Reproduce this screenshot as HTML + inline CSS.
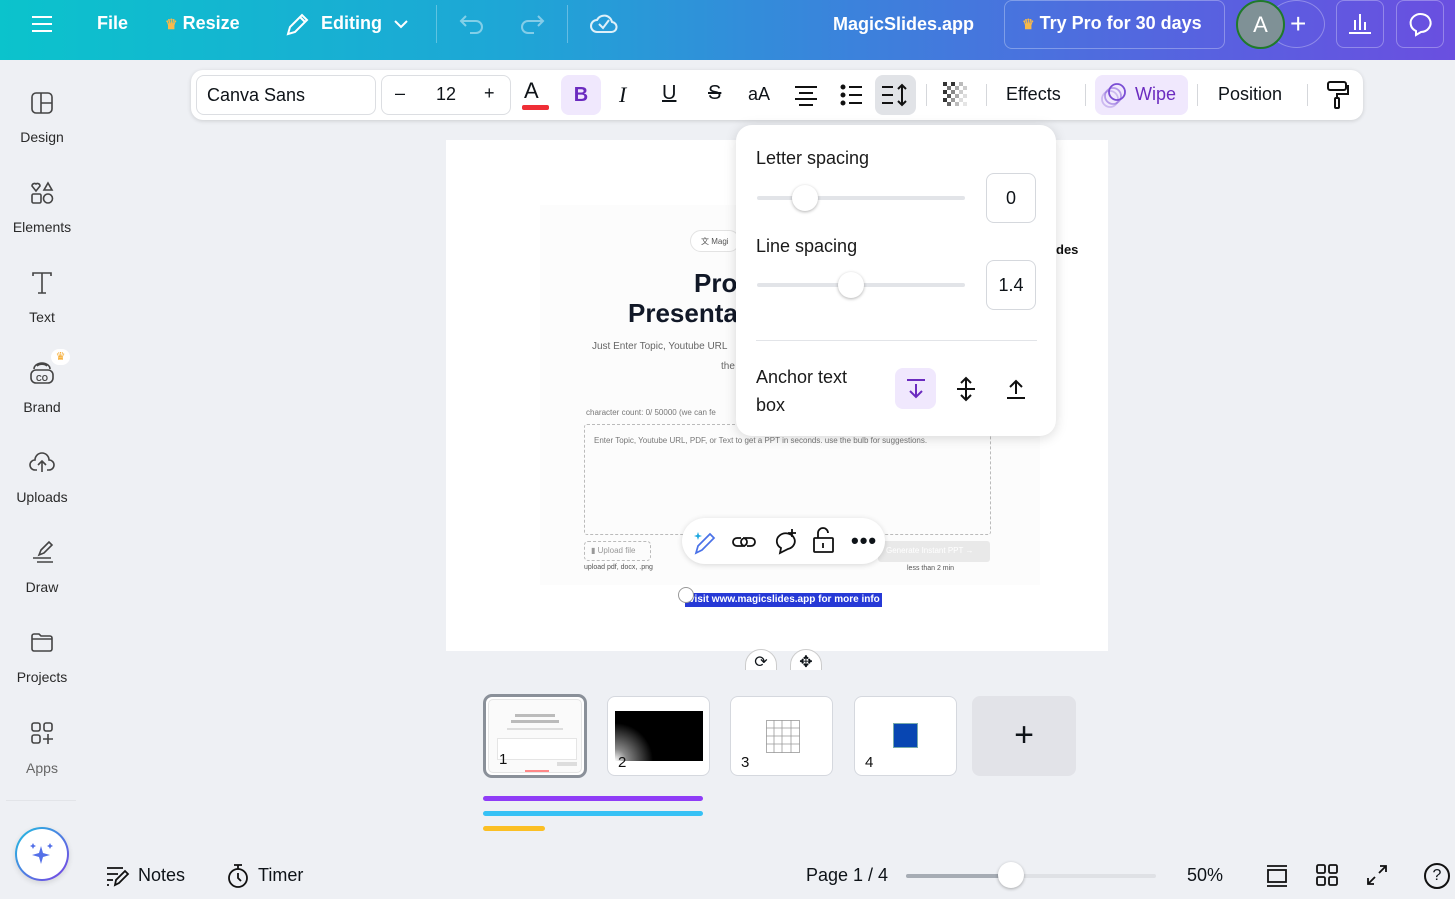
<!DOCTYPE html>
<html><head><meta charset="utf-8">
<style>
*{box-sizing:border-box;margin:0;padding:0}
body{width:1455px;height:899px;overflow:hidden;background:#eef0f4;font-family:"Liberation Sans",sans-serif;color:#0e1318;position:relative}
.abs{position:absolute}
.hdr{left:0;top:0;width:1455px;height:60px;background:linear-gradient(90deg,#0bc3cc 0%,#1ea6d6 35%,#3d80dc 60%,#5a5fe0 85%,#6a4fe0 100%)}
.hw{color:#fff;font-weight:bold;font-size:18px;top:13px}
.tb{left:191px;top:70px;width:1172px;height:50px;background:#fff;border-radius:12px;box-shadow:0 1px 4px rgba(0,0,0,.15)}
.tt{font-size:18px;color:#0e1318;top:84px}
.side{font-size:14px;color:#2a2a2a;width:84px;text-align:center;left:0}
.pop{left:736px;top:125px;width:320px;height:311px;background:#fff;border-radius:16px;box-shadow:0 2px 12px rgba(0,0,0,.15)}
.track{height:4px;background:#e2e4e8;border-radius:2px}
.knob{width:26px;height:26px;border-radius:50%;background:#fff;box-shadow:0 1px 3px rgba(0,0,0,.3)}
.box{width:50px;height:50px;border:1px solid #d5d8dd;border-radius:8px;text-align:center;line-height:48px;font-size:18px}
.thumb{top:696px;width:103px;height:80px;border:1px solid #d5d8de;border-radius:8px;background:#fff}
.num{font-size:15px;color:#111}
</style></head><body>

<div class="abs hdr"></div>
<svg class="abs" style="left:30px;top:14px" width="24" height="20"><g stroke="#fff" stroke-width="2"><line x1="2" y1="3" x2="22" y2="3"/><line x1="2" y1="10" x2="22" y2="10"/><line x1="2" y1="17" x2="22" y2="17"/></g></svg>
<div class="abs hw" style="left:97px">File</div>
<div class="abs hw" style="left:165px"><span style="color:#f8b94a;font-size:14px">♛</span> Resize</div>
<svg class="abs" style="left:284px;top:12px" width="26" height="26" fill="none" stroke="#fff" stroke-width="2"><path d="M4 22 L6 15 L18 3 L23 8 L11 20 Z M16 5 L21 10"/></svg>
<div class="abs hw" style="left:321px">Editing</div>
<svg class="abs" style="left:393px;top:18px" width="16" height="12" fill="none" stroke="#fff" stroke-width="2"><path d="M2 3 L8 9 L14 3"/></svg>
<div class="abs" style="left:436px;top:5px;width:1px;height:38px;background:rgba(255,255,255,.3)"></div>
<svg class="abs" style="left:458px;top:12px" width="30" height="24" fill="none" stroke="rgba(255,255,255,.45)" stroke-width="2"><path d="M8 4 L3 9 L8 14 M3 9 H18 a6 6 0 0 1 0 12 H12"/></svg>
<svg class="abs" style="left:516px;top:12px" width="30" height="24" fill="none" stroke="rgba(255,255,255,.45)" stroke-width="2"><path d="M22 4 L27 9 L22 14 M27 9 H12 a6 6 0 0 0 0 12 H18"/></svg>
<div class="abs" style="left:567px;top:5px;width:1px;height:38px;background:rgba(255,255,255,.3)"></div>
<svg class="abs" style="left:589px;top:10px" width="30" height="26" fill="none" stroke="rgba(255,255,255,.85)" stroke-width="2"><path d="M8 22 H22 a5 5 0 0 0 1 -10 a8 8 0 0 0 -15 -2 a6 6 0 0 0 0 12 Z M10 14 L14 18 L20 10"/></svg>
<div class="abs hw" style="left:833px;top:14px;font-size:18px">MagicSlides.app</div>
<div class="abs" style="left:1004px;top:0;width:221px;height:49px;border:1px solid rgba(255,255,255,.3);border-radius:8px"></div>
<div class="abs hw" style="left:1022px;top:13px"><span style="color:#f8b94a;font-size:14px">♛</span> Try Pro for 30 days</div>
<div class="abs" style="left:1268px;top:0;width:57px;height:48px;border:1px solid rgba(255,255,255,.3);border-radius:50%"></div>
<div class="abs" style="left:1236px;top:0;width:49px;height:49px;border-radius:50%;background:#7f9196;border:2px solid #1f7a2a;color:#fff;font-size:22px;text-align:center;line-height:45px">A</div>
<div class="abs" style="left:1290px;top:8px;color:#fff;font-size:28px;font-weight:300">+</div>
<div class="abs" style="left:1336px;top:0;width:48px;height:48px;border:1px solid rgba(255,255,255,.3);border-radius:8px"></div>
<svg class="abs" style="left:1346px;top:12px" width="28" height="24" fill="none" stroke="#fff" stroke-width="2"><path d="M3 21 H25 M9 18 V8 M14 18 V2 M19 18 V10"/></svg>
<div class="abs" style="left:1396px;top:0;width:48px;height:48px;border:1px solid rgba(255,255,255,.3);border-radius:8px"></div>
<svg class="abs" style="left:1406px;top:10px" width="28" height="28" fill="none" stroke="#fff" stroke-width="2"><path d="M10 25 L10 21 A10 9 0 1 1 15 22 Z"/></svg>

<!-- sidebar -->
<svg class="abs" style="left:30px;top:91px" width="24" height="24" fill="none" stroke="#444" stroke-width="1.6"><rect x="2" y="2" width="20" height="20" rx="4"/><path d="M11 2 V22 M11 12 H22"/></svg>
<div class="abs side" style="top:129px">Design</div>
<svg class="abs" style="left:30px;top:181px" width="24" height="24" fill="none" stroke="#444" stroke-width="1.6"><path d="M6 10 L2 5 a2.5 2.5 0 0 1 4 -2 a2.5 2.5 0 0 1 4 2 Z M18 2 L22 9 H14 Z"/><rect x="2" y="13" width="9" height="9" rx="1.5"/><circle cx="18" cy="17.5" r="4.5"/></svg>
<div class="abs side" style="top:219px">Elements</div>
<svg class="abs" style="left:30px;top:271px" width="24" height="24" fill="none" stroke="#444" stroke-width="1.6"><path d="M3 5 V2 H21 V5 M12 2 V22 M8 22 H16"/></svg>
<div class="abs side" style="top:309px">Text</div>
<svg class="abs" style="left:29px;top:360px" width="26" height="26" fill="none" stroke="#444" stroke-width="1.6"><rect x="2" y="10" width="22" height="13" rx="5"/><path d="M5 9 a8 6 0 0 1 16 0 M8 6 a6 4 0 0 1 10 0"/><text x="13" y="21" font-size="8" text-anchor="middle" fill="#444" stroke="none" font-family="Liberation Sans" font-weight="bold">CO</text></svg>
<div class="abs" style="left:51px;top:349px;width:19px;height:16px;background:#fff;border-radius:8px;color:#f5a623;font-size:11px;text-align:center;line-height:16px">♛</div>
<div class="abs side" style="top:399px">Brand</div>
<svg class="abs" style="left:29px;top:450px" width="26" height="24" fill="none" stroke="#444" stroke-width="1.6"><path d="M8 20 H6 a5 5 0 0 1 0 -10 a7 7 0 0 1 14 0 a5 5 0 0 1 0 10 H18 M13 22 V12 M9 15 L13 11 L17 15"/></svg>
<div class="abs side" style="top:489px">Uploads</div>
<svg class="abs" style="left:29px;top:539px" width="26" height="26" fill="none" stroke="#444" stroke-width="1.6"><path d="M10 16 L12 11 L20 3 L23 6 L15 14 Z M4 19 H22 M8 23 H24"/></svg>
<div class="abs side" style="top:579px">Draw</div>
<svg class="abs" style="left:30px;top:631px" width="24" height="22" fill="none" stroke="#444" stroke-width="1.6"><path d="M2 5 a2 2 0 0 1 2 -2 H9 L11 5 H20 a2 2 0 0 1 2 2 V18 a2 2 0 0 1 -2 2 H4 a2 2 0 0 1 -2 -2 Z M2 8 H22"/></svg>
<div class="abs side" style="top:669px">Projects</div>
<svg class="abs" style="left:30px;top:721px" width="24" height="24" fill="none" stroke="#444" stroke-width="1.6"><rect x="2" y="2" width="8" height="8" rx="2"/><rect x="14" y="2" width="8" height="8" rx="2"/><rect x="2" y="14" width="8" height="8" rx="2"/><path d="M18 13 V23 M13 18 H23"/></svg>
<div class="abs side" style="top:760px;color:#666">Apps</div>
<div class="abs" style="left:6px;top:800px;width:70px;height:1px;background:#e2e4e8"></div>
<div class="abs" style="left:15px;top:827px;width:54px;height:54px;border-radius:50%;background:linear-gradient(#fff,#fff) padding-box,linear-gradient(135deg,#1ec0e0,#7b3fe4) border-box;border:2px solid transparent;box-shadow:0 2px 6px rgba(0,0,0,.12)"></div>
<svg class="abs" style="left:27px;top:840px" width="30" height="28" fill="#5470e8"><path d="M14 6 L16 13 L23 15 L16 17 L14 24 L12 17 L5 15 L12 13 Z"/><path d="M6 3 L7 5 L9 6 L7 7 L6 9 L5 7 L3 6 L5 5 Z"/><path d="M23 3 L24 5 L26 6 L24 7 L23 9 L22 7 L20 6 L22 5 Z"/></svg>

<!-- slide -->
<div class="abs" style="left:446px;top:140px;width:662px;height:511px;background:#fff"></div>
<div class="abs" style="left:540px;top:205px;width:500px;height:380px;background:#fcfcfc"></div>
<div class="abs" style="left:690px;top:230px;width:50px;height:22px;border:1px solid #e3e3e3;border-radius:11px;font-size:8px;color:#555;padding:5px 0 0 10px;background:#fff">文 Magi</div>
<div class="abs" style="left:694px;top:268px;font-size:26px;font-weight:bold;color:#111827">Pro</div>
<div class="abs" style="left:628px;top:298px;font-size:26px;font-weight:bold;color:#111827">Presenta</div>
<div class="abs" style="left:592px;top:341px;font-size:10px;color:#666">Just Enter Topic, Youtube URL</div>
<div class="abs" style="left:721px;top:361px;font-size:10px;color:#666">the</div>
<div class="abs" style="left:1056px;top:242px;font-size:13px;font-weight:bold;color:#111">des</div>
<div class="abs" style="left:586px;top:408px;font-size:8px;color:#777">character count: 0/ 50000 (we can fe</div>
<div class="abs" style="left:584px;top:424px;width:407px;height:111px;border:1px dashed #bbb;border-radius:3px"></div>
<div class="abs" style="left:594px;top:436px;font-size:8px;color:#777">Enter Topic, Youtube URL, PDF, or Text to get a PPT in seconds. use the bulb for suggestions.</div>
<div class="abs" style="left:584px;top:541px;width:67px;height:20px;border:1px dashed #bbb;border-radius:4px;font-size:8px;color:#999;padding:4px 0 0 6px">▮ Upload file</div>
<div class="abs" style="left:584px;top:564px;font-size:7px;color:#555">upload pdf, docx, .png</div>
<div class="abs" style="left:878px;top:541px;width:112px;height:21px;background:#e9e9e9;border-radius:3px;font-size:8px;color:#fff;padding:5px 0 0 8px">Generate Instant PPT →</div>
<div class="abs" style="left:907px;top:565px;font-size:7px;color:#555">less than 2 min</div>
<div class="abs" style="left:685px;top:593px;width:197px;height:14px;background:#2639d6;color:#fff;font-size:10px;font-weight:bold;line-height:14px;padding-left:4px">visit www.magicslides.app for more info</div>
<div class="abs" style="left:678px;top:587px;width:16px;height:16px;border-radius:50%;background:#fff;border:1px solid #999"></div>

<!-- context toolbar -->
<div class="abs" style="left:682px;top:518px;width:203px;height:46px;background:#fff;border-radius:23px;box-shadow:0 1px 6px rgba(0,0,0,.15)"></div>
<svg class="abs" style="left:692px;top:529px" width="26" height="26" fill="none" stroke="#4a72e8" stroke-width="1.7"><path d="M4 24 L6 17 L18 5 L22 9 L10 21 Z"/><path d="M6 3 L7 6 L10 7 L7 8 L6 11 L5 8 L2 7 L5 6 Z" fill="#1ea8e0" stroke="none"/></svg>
<svg class="abs" style="left:731px;top:529px" width="26" height="26" fill="none" stroke="#111" stroke-width="1.8"><path d="M10 9 H6 a4 4 0 0 0 0 8 H12 a4 4 0 0 0 0 -8 M16 17 H20 a4 4 0 0 0 0 -8 H14 a4 4 0 0 0 0 8"/></svg>
<svg class="abs" style="left:771px;top:528px" width="28" height="28" fill="none" stroke="#111" stroke-width="1.8"><path d="M9 25 L10 20 a9 8 0 1 1 7 1 Z M21 1 V9 M17 5 H25"/></svg>
<svg class="abs" style="left:812px;top:526px" width="24" height="28" fill="none" stroke="#111" stroke-width="1.8"><rect x="2" y="12" width="19" height="14" rx="1"/><path d="M6 12 V7 a5 5 0 0 1 10 0 M11 17 V22"/></svg>
<div class="abs" style="left:851px;top:528px;font-size:22px;font-weight:bold;letter-spacing:1px">•••</div>
<div class="abs" style="left:745px;top:649px;width:32px;height:24px;border:1px solid #ccc;border-radius:16px 16px 0 0;background:#fff;font-size:16px;text-align:center;line-height:26px">⟳</div>
<div class="abs" style="left:790px;top:649px;width:32px;height:24px;border:1px solid #ccc;border-radius:16px 16px 0 0;background:#fff;font-size:16px;text-align:center;line-height:26px">✥</div>
<div class="abs" style="left:440px;top:670px;width:680px;height:20px;background:#eef0f4"></div>

<!-- format toolbar -->
<div class="abs tb"></div>
<div class="abs" style="left:196px;top:75px;width:180px;height:40px;border:1px solid #dcdee2;border-radius:8px;font-size:18px;padding:9px 0 0 10px">Canva Sans</div>
<div class="abs" style="left:381px;top:75px;width:130px;height:40px;border:1px solid #dcdee2;border-radius:8px"></div>
<div class="abs tt" style="left:395px;top:83px">–</div>
<div class="abs tt" style="left:436px">12</div>
<div class="abs tt" style="left:484px;top:83px">+</div>
<div class="abs" style="left:524px;top:78px;font-size:22px">A</div>
<div class="abs" style="left:522px;top:105px;width:27px;height:5px;background:#ef2e36;border-radius:2px"></div>
<div class="abs" style="left:561px;top:75px;width:40px;height:40px;background:#f0e8fd;border-radius:8px;color:#6b2bbf;font-weight:bold;font-size:20px;text-align:center;line-height:40px">B</div>
<div class="abs" style="left:619px;top:82px;font-size:22px;font-style:italic;font-family:'Liberation Serif',serif">I</div>
<div class="abs" style="left:662px;top:82px;font-size:20px;text-decoration:underline">U</div>
<div class="abs" style="left:708px;top:82px;font-size:20px;text-decoration:line-through">S</div>
<div class="abs tt" style="left:748px">aA</div>
<svg class="abs" style="left:794px;top:84px" width="24" height="22" stroke="#111" stroke-width="2"><path d="M1 3 H23 M5 9 H19 M1 15 H23 M5 21 H19"/></svg>
<svg class="abs" style="left:840px;top:84px" width="24" height="22" stroke="#111" stroke-width="2"><circle cx="3" cy="3" r="1.5" fill="#111"/><circle cx="3" cy="11" r="1.5" fill="#111"/><circle cx="3" cy="19" r="1.5" fill="#111"/><path d="M9 3 H22 M9 11 H22 M9 19 H22"/></svg>
<div class="abs" style="left:875px;top:75px;width:41px;height:40px;background:#e1e3e7;border-radius:8px"></div>
<svg class="abs" style="left:881px;top:83px" width="30" height="24" fill="none" stroke="#111" stroke-width="2"><path d="M1 4 H12 M1 12 H12 M1 20 H12 M21 2 V22 M17 6 L21 2 L25 6 M17 18 L21 22 L25 18"/></svg>
<div class="abs" style="left:926px;top:84px;width:1px;height:22px;background:#d5d7db"></div>
<svg class="abs" style="left:943px;top:82px" width="26" height="26"><g fill="#333"><rect x="0" y="0" width="4" height="4"/><rect x="8" y="0" width="4" height="4"/><rect x="16" y="0" width="4" height="4" fill="#bbb"/><rect x="4" y="4" width="4" height="4" fill="#777"/><rect x="12" y="4" width="4" height="4" fill="#aaa"/><rect x="20" y="4" width="4" height="4" fill="#ccc"/><rect x="0" y="8" width="4" height="4"/><rect x="8" y="8" width="4" height="4" fill="#888"/><rect x="16" y="8" width="4" height="4" fill="#ccc"/><rect x="4" y="12" width="4" height="4" fill="#555"/><rect x="12" y="12" width="4" height="4" fill="#aaa"/><rect x="20" y="12" width="4" height="4" fill="#ddd"/><rect x="0" y="16" width="4" height="4"/><rect x="8" y="16" width="4" height="4" fill="#999"/><rect x="16" y="16" width="4" height="4" fill="#ddd"/><rect x="4" y="20" width="4" height="4" fill="#666"/><rect x="12" y="20" width="4" height="4" fill="#bbb"/><rect x="20" y="20" width="4" height="4" fill="#e5e5e5"/></g></svg>
<div class="abs" style="left:986px;top:84px;width:1px;height:22px;background:#d5d7db"></div>
<div class="abs tt" style="left:1006px">Effects</div>
<div class="abs" style="left:1085px;top:84px;width:1px;height:22px;background:#d5d7db"></div>
<div class="abs" style="left:1095px;top:75px;width:93px;height:40px;background:#f0e8fd;border-radius:8px"></div>
<svg class="abs" style="left:1101px;top:81px" width="30" height="28" fill="none" stroke="#7a4dd4" stroke-width="1.8"><circle cx="16" cy="11" r="8"/><circle cx="12" cy="15" r="8" opacity=".5"/><circle cx="9" cy="18" r="8" opacity=".3"/></svg>
<div class="abs tt" style="left:1135px;color:#6b2bbf">Wipe</div>
<div class="abs" style="left:1197px;top:84px;width:1px;height:22px;background:#d5d7db"></div>
<div class="abs tt" style="left:1218px">Position</div>
<div class="abs" style="left:1307px;top:84px;width:1px;height:22px;background:#d5d7db"></div>
<svg class="abs" style="left:1326px;top:80px" width="24" height="30" fill="none" stroke="#111" stroke-width="2"><rect x="2" y="2" width="18" height="8" rx="2"/><path d="M20 6 H22 V14 H11 V18"/><rect x="9" y="18" width="4" height="10" rx="1"/></svg>

<!-- spacing popup -->
<div class="abs pop"></div>
<div class="abs" style="left:756px;top:148px;font-size:18px;color:#1a1a1a">Letter spacing</div>
<div class="abs track" style="left:757px;top:196px;width:208px"></div>
<div class="abs knob" style="left:792px;top:185px"></div>
<div class="abs box" style="left:986px;top:173px">0</div>
<div class="abs" style="left:756px;top:236px;font-size:18px;color:#1a1a1a">Line spacing</div>
<div class="abs track" style="left:757px;top:283px;width:208px"></div>
<div class="abs knob" style="left:838px;top:272px"></div>
<div class="abs box" style="left:986px;top:260px">1.4</div>
<div class="abs" style="left:756px;top:340px;width:281px;height:1px;background:#e2e4e8"></div>
<div class="abs" style="left:756px;top:363px;font-size:18px;color:#1a1a1a;line-height:28px">Anchor text<br>box</div>
<div class="abs" style="left:895px;top:368px;width:41px;height:41px;background:#f0e8fd;border-radius:8px"></div>
<svg class="abs" style="left:904px;top:377px" width="24" height="24" fill="none" stroke="#6b2bbf" stroke-width="2"><path d="M3 3 H21 M12 7 V20 M6 14 L12 20 L18 14"/></svg>
<svg class="abs" style="left:954px;top:376px" width="24" height="26" fill="none" stroke="#111" stroke-width="2"><path d="M3 13 H21 M12 2 V24 M7 7 L12 2 L17 7 M7 19 L12 24 L17 19"/></svg>
<svg class="abs" style="left:1004px;top:377px" width="24" height="24" fill="none" stroke="#111" stroke-width="2"><path d="M3 21 H21 M12 17 V4 M6 10 L12 4 L18 10"/></svg>

<!-- thumbnails -->
<div class="abs" style="left:483px;top:694px;width:104px;height:84px;border:3px solid #8a9099;border-radius:9px;background:#fff;padding:2px"><div style="width:100%;height:100%;border-radius:5px;background:#fafafa;position:relative;border:1px solid #e5e5e5"><div style="position:absolute;left:26px;top:14px;width:40px;height:3px;background:#bbb"></div><div style="position:absolute;left:22px;top:20px;width:48px;height:3px;background:#bbb"></div><div style="position:absolute;left:18px;top:28px;width:56px;height:2px;background:#ddd"></div><div style="position:absolute;left:8px;top:38px;width:80px;height:22px;border:1px solid #e5e5e5;background:#fff"></div><div style="position:absolute;left:68px;top:62px;width:20px;height:4px;background:#ddd"></div><div style="position:absolute;left:36px;top:70px;width:24px;height:2px;background:#f88"></div></div></div>
<div class="abs num" style="left:499px;top:751px">1</div>
<div class="abs thumb" style="left:607px"><div style="position:absolute;left:7px;top:14px;width:88px;height:50px;background:radial-gradient(circle at 0 100%,#fff 0,#888 12px,#000 38px)"></div></div>
<div class="abs num" style="left:618px;top:754px">2</div>
<div class="abs thumb" style="left:730px"><svg style="position:absolute;left:35px;top:23px" width="34" height="33" stroke="#999" stroke-width=".8" fill="none"><rect x=".5" y=".5" width="33" height="32"/><path d="M8 0 V33 M16 0 V33 M25 0 V33 M0 8 H34 M0 16 H34 M0 24 H34"/></svg></div>
<div class="abs num" style="left:741px;top:754px">3</div>
<div class="abs thumb" style="left:854px"><div style="position:absolute;left:38px;top:26px;width:25px;height:25px;background:#0846b2;border:1px solid #7aa"></div></div>
<div class="abs num" style="left:865px;top:754px">4</div>
<div class="abs" style="left:972px;top:696px;width:104px;height:80px;background:#e2e3e8;border-radius:8px;font-size:34px;text-align:center;line-height:78px;font-weight:300">+</div>
<div class="abs" style="left:483px;top:796px;width:220px;height:5px;background:#8f3cf7;border-radius:3px"></div>
<div class="abs" style="left:483px;top:811px;width:220px;height:5px;background:#36c1f5;border-radius:3px"></div>
<div class="abs" style="left:483px;top:826px;width:62px;height:5px;background:#fbbf24;border-radius:3px"></div>

<!-- bottom bar -->
<svg class="abs" style="left:106px;top:865px" width="24" height="22" fill="none" stroke="#111" stroke-width="1.8"><path d="M1 3 H17 M1 9 H12 M1 15 H7 M1 20 H3 M9 20 L10 15 L19 6 L22 9 L13 18 Z"/></svg>
<div class="abs" style="left:138px;top:865px;font-size:18px">Notes</div>
<svg class="abs" style="left:226px;top:863px" width="24" height="26" fill="none" stroke="#111" stroke-width="1.8"><path d="M8 2 H16 M12 2 V6"/><circle cx="12" cy="15" r="9"/><path d="M12 10 V15 L15 18"/></svg>
<div class="abs" style="left:258px;top:865px;font-size:18px">Timer</div>
<div class="abs" style="left:806px;top:865px;font-size:18px">Page 1 / 4</div>
<div class="abs" style="left:906px;top:874px;width:250px;height:4px;background:#dfe1e5;border-radius:2px"></div>
<div class="abs" style="left:906px;top:874px;width:105px;height:4px;background:#a6acb4;border-radius:2px"></div>
<div class="abs knob" style="left:998px;top:862px;width:26px;height:26px"></div>
<div class="abs" style="left:1187px;top:865px;font-size:18px">50%</div>
<svg class="abs" style="left:1266px;top:865px" width="22" height="22" fill="none" stroke="#111" stroke-width="1.8"><path d="M1 1 H21 M1 21 H21"/><rect x="2" y="5" width="18" height="12"/></svg>
<svg class="abs" style="left:1316px;top:864px" width="22" height="22" fill="none" stroke="#111" stroke-width="1.8"><rect x="1" y="1" width="8" height="8" rx="1.5"/><rect x="13" y="1" width="8" height="8" rx="1.5"/><rect x="1" y="13" width="8" height="8" rx="1.5"/><rect x="13" y="13" width="8" height="8" rx="1.5"/></svg>
<svg class="abs" style="left:1366px;top:864px" width="22" height="22" fill="none" stroke="#111" stroke-width="1.8"><path d="M13 9 L20 2 M14 2 H20 V8 M9 13 L2 20 M2 14 V20 H8"/></svg>
<div class="abs" style="left:1424px;top:863px;width:26px;height:26px;border:2px solid #111;border-radius:50%;text-align:center;font-size:16px;line-height:22px">?</div>
</body></html>
